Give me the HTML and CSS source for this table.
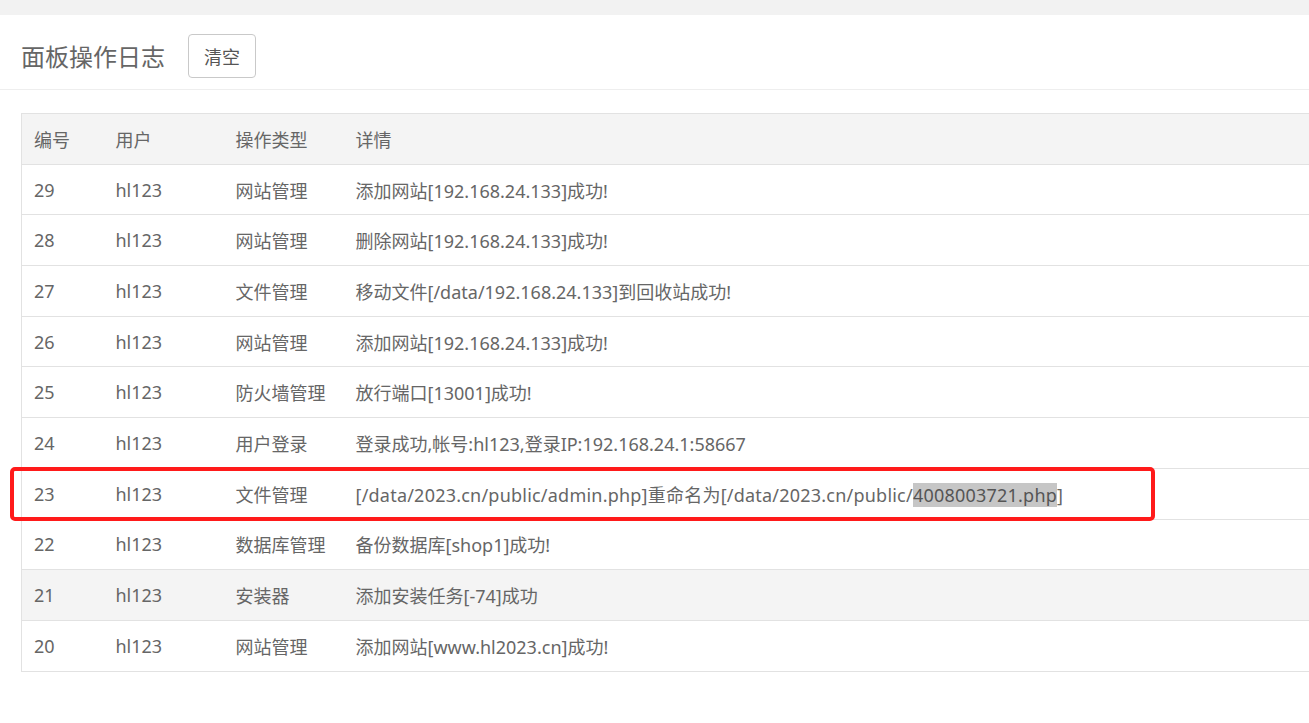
FILE: index.html
```html
<!DOCTYPE html>
<html lang="zh-CN">
<head>
<meta charset="utf-8">
<title>面板操作日志</title>
<link rel="stylesheet" href="styles.css">
</head>
<body>
<div class="topbar"></div>
<div class="header">
  <h1 class="title">面板操作日志</h1>
  <button class="btn">清空</button>
</div>
<div class="content">
  <table class="log">
    <colgroup><col class="c1"><col class="c2"><col class="c3"><col class="c4"></colgroup>
    <thead>
      <tr><th>编号</th><th>用户</th><th>操作类型</th><th>详情</th></tr>
    </thead>
    <tbody>
      <tr><td>29</td><td>hl123</td><td>网站管理</td><td>添加网站[192.168.24.133]成功!</td></tr>
      <tr><td>28</td><td>hl123</td><td>网站管理</td><td>删除网站[192.168.24.133]成功!</td></tr>
      <tr><td>27</td><td>hl123</td><td>文件管理</td><td>移动文件[/data/192.168.24.133]到回收站成功!</td></tr>
      <tr><td>26</td><td>hl123</td><td>网站管理</td><td>添加网站[192.168.24.133]成功!</td></tr>
      <tr><td>25</td><td>hl123</td><td>防火墙管理</td><td>放行端口[13001]成功!</td></tr>
      <tr><td>24</td><td>hl123</td><td>用户登录</td><td>登录成功,帐号:hl123,登录IP:192.168.24.1:58667</td></tr>
      <tr class="marked"><td>23</td><td>hl123</td><td>文件管理</td><td><span class="wide">[/data/2023.cn/public/admin.php]重命名为[/data/2023.cn/public/<span class="sel">4008003721.php</span>]</span><span class="redbox"></span></td></tr>
      <tr><td>22</td><td>hl123</td><td>数据库管理</td><td>备份数据库[shop1]成功!</td></tr>
      <tr class="hover"><td>21</td><td>hl123</td><td>安装器</td><td>添加安装任务[-74]成功</td></tr>
      <tr><td>20</td><td>hl123</td><td>网站管理</td><td>添加网站[www.hl2023.cn]成功!</td></tr>
    </tbody>
  </table>
</div>
</body>
</html>
```
FILE: styles.css
```css
html, body {
  margin: 0;
  padding: 0;
  overflow: hidden;
  background: #fff;
}
body {
  font-family: "Noto Sans", "Noto Sans CJK SC", sans-serif;
  color: #666;
  width: 1309px;
  height: 723px;
  position: relative;
}
.topbar {
  height: 15px;
  background: #f2f2f2;
}
.header {
  height: 75px;
  box-sizing: border-box;
  padding-top: 7px;
  border-bottom: 1px solid #eee;
  display: flex;
  align-items: center;
  padding-left: 21px;
  gap: 23px;
}
.title {
  margin: 0;
  font-size: 24px;
  font-weight: normal;
  color: #666;
}
.btn {
  width: 68px;
  height: 44px;
  border: 1px solid #c9c9c9;
  border-radius: 4px;
  background: #fff;
  color: #555;
  font-family: inherit;
  font-size: 18px;
  padding: 0;
}
.content {
  padding: 23px 0 0 21px;
}
.log {
  border-collapse: collapse;
  width: 1320px;
  table-layout: fixed;
  font-size: 18px;
  color: #666;
}
.c1 { width: 82px; }
.c2 { width: 120px; }
.c3 { width: 120px; }
.log th, .log td {
  text-align: left;
  font-weight: normal;
  padding: 0 0 0 12px;
  height: 49.7px;
  border: 1px solid #e2e2e2;
  border-left: none;
  border-right: none;
  white-space: nowrap;
}
.log tr > :first-child {
  border-left: 1px solid #e2e2e2;
}
.log thead tr {
  background: #f4f4f4;
}
.log tr.hover {
  background: #f4f4f4;
}
.log td:last-child {
  position: relative;
}
.wide {
  letter-spacing: 0.22px;
}
.sel {
  background: #c6c6c6;
  color: #555;
}
.redbox {
  position: absolute;
  left: -334px;
  top: -2px;
  width: 1137px;
  height: 46px;
  border: 4px solid #ff1a1a;
  border-radius: 5px;
  pointer-events: none;
}
```
